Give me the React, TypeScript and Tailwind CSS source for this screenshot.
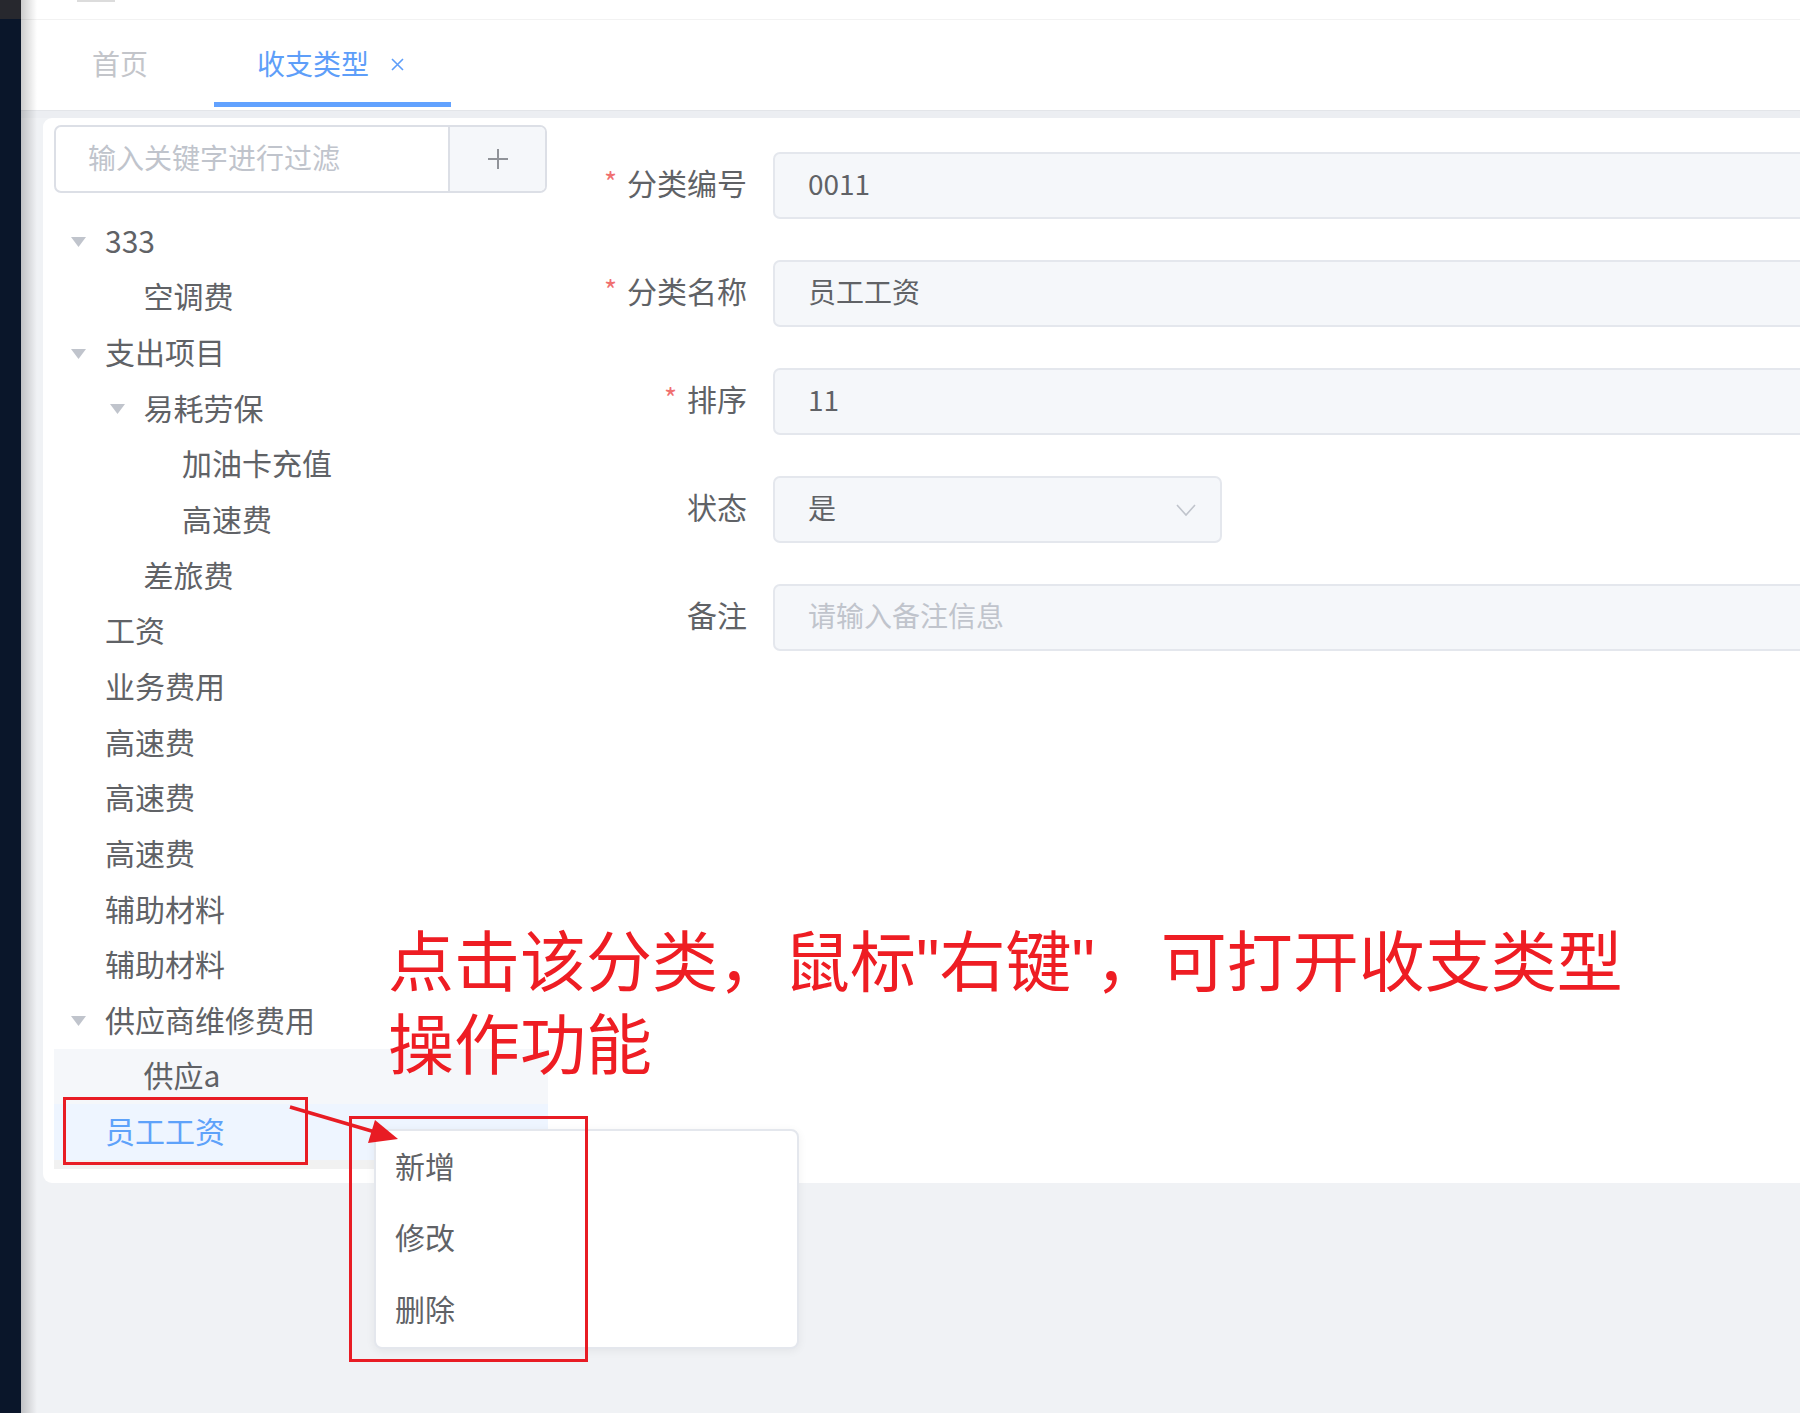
import { clsx } from 'clsx';

type TreeNode = {
  label: string;
  level: 0 | 1 | 2;
  arrow?: boolean;
  hover?: boolean;
  current?: boolean;
};

const nodes: TreeNode[] = [
  { label: '333', level: 0, arrow: true },
  { label: '空调费', level: 1 },
  { label: '支出项目', level: 0, arrow: true },
  { label: '易耗劳保', level: 1, arrow: true },
  { label: '加油卡充值', level: 2 },
  { label: '高速费', level: 2 },
  { label: '差旅费', level: 1 },
  { label: '工资', level: 0 },
  { label: '业务费用', level: 0 },
  { label: '高速费', level: 0 },
  { label: '高速费', level: 0 },
  { label: '高速费', level: 0 },
  { label: '辅助材料', level: 0 },
  { label: '辅助材料', level: 0 },
  { label: '供应商维修费用', level: 0, arrow: true },
  { label: '供应a', level: 1, hover: true },
  { label: '员工工资', level: 0, current: true },
];

const indent = ['pl-0', 'pl-[38.5px]', 'pl-[77px]'];

function Caret() {
  return (
    <svg width="15" height="10" viewBox="0 0 15 10">
      <polygon points="0,0 15,0 7.5,10" fill="#c0c4cc" />
    </svg>
  );
}

function TreeRow({ node }: { node: TreeNode }) {
  return (
    <div
      className={clsx(
        'flex h-[55.65px] items-center pb-[3px]',
        indent[node.level],
        node.hover && 'bg-[#f5f7fa]',
        node.current && 'bg-[#eef5ff]'
      )}
    >
      <span className="flex w-[51px] shrink-0 pl-[17px] pt-[4px]">{node.arrow && <Caret />}</span>
      <span className={clsx('text-[30px]', node.current ? 'text-[#5ea2fa]' : 'text-[#606266]')}>
        {node.label}
      </span>
    </div>
  );
}

function FormRow({ label, required, children }: { label: string; required?: boolean; children: React.ReactNode }) {
  return (
    <div className="flex h-[67px] items-center">
      <div className="flex w-[225px] shrink-0 items-center justify-end pb-[6px] pr-[26px] text-[30px] text-[#606266]">
        {required && <span className="mr-[10px] -mt-[3px] text-[28px] leading-none text-[#f07070]">*</span>}
        {label}
      </div>
      {children}
    </div>
  );
}

function TextBox({ value, placeholder }: { value?: string; placeholder?: string }) {
  return (
    <div className="flex h-[67px] w-[1100px] shrink-0 items-center rounded-[7px] border-2 border-[#e4e7ed] bg-[#f5f7fa] pb-[6px] pl-[33px] text-[28px]">
      {value ? <span className="text-[#606266]">{value}</span> : <span className="text-[#c0c4cc]">{placeholder}</span>}
    </div>
  );
}

export default function App() {
  return (
    <div
      className="relative flex h-[1413px] w-[1800px] overflow-hidden bg-[#f0f2f5]"
      style={{ fontFamily: '"Noto Sans CJK SC", "Noto Sans", sans-serif' }}
    >
      {/* dark side menu edge */}
      <div className="flex w-[21px] shrink-0 flex-col bg-[#0a162a]">
        <div className="h-[19px] bg-[#27282e]" />
      </div>

      <div className="flex min-w-0 flex-1 flex-col">
        <div className="h-[20px] border-b border-[#f2f2f2] bg-white">
          <div className="ml-[56px] h-[2px] w-[38px] bg-[#dcdcdc]" />
        </div>

        {/* tabs */}
        <div className="flex h-[90px] items-stretch bg-white pl-[28px]">
          <div className="flex items-center px-[43px] pb-[5px] text-[28px] text-[#c3c5ca]">首页</div>
          <div className="relative ml-[23px] flex items-center pb-[5px] pl-[43px] pr-[46px] text-[28px] text-[#5e9ef9]">
            收支类型
            <svg className="ml-[21px] mt-[3px]" width="15" height="15" viewBox="0 0 15 15">
              <path d="M2 2 L13 13 M13 2 L2 13" stroke="#5e9ef9" strokeWidth="1.6" />
            </svg>
            <div className="absolute bottom-[3px] left-0 right-0 h-[5px] bg-[#62a2ff]" />
          </div>
        </div>
        <div className="h-[8px] border-t border-[#e3e5e9] bg-[#eceef2]" />

        {/* card */}
        <div className="pl-[22px]">
          <div className="flex h-[1065px] rounded-l-[9px] bg-white">
            <div className="w-[505px] shrink-0 pl-[11px] pt-[7px]">
              <div className="flex h-[68px] w-[493px] overflow-hidden rounded-[7px] border-2 border-[#dcdfe6]">
                <div className="flex flex-1 items-center pb-[5px] pl-[32px] text-[28px] text-[#c0c4cc]">输入关键字进行过滤</div>
                <div className="flex w-[97px] items-center justify-center border-l-2 border-[#dcdfe6] bg-[#f5f7fa]">
                  <svg width="22" height="22" viewBox="0 0 22 22">
                    <path d="M11 1 V21 M1 11 H21" stroke="#909399" strokeWidth="2" />
                  </svg>
                </div>
              </div>
              <div className="mt-[21px]">
                {nodes.map((n, i) => (
                  <TreeRow key={i} node={n} />
                ))}
              </div>
              <div className="h-[9px] bg-[#f1f1f1]" />
            </div>

            <div className="flex min-w-0 flex-1 flex-col gap-[41px] overflow-hidden pt-[34px]">
              <FormRow label="分类编号" required>
                <TextBox value="0011" />
              </FormRow>
              <FormRow label="分类名称" required>
                <TextBox value="员工工资" />
              </FormRow>
              <FormRow label="排序" required>
                <TextBox value="11" />
              </FormRow>
              <FormRow label="状态">
                <div className="flex h-[67px] w-[449px] shrink-0 items-center justify-between rounded-[7px] border-2 border-[#e4e7ed] bg-[#f5f7fa] pl-[33px] pr-[24px] text-[28px] text-[#606266]">
                  <span className="pb-[6px]">是</span>
                  <svg width="20" height="14" viewBox="0 0 20 14">
                    <path d="M1 2 L10 12 L19 2" fill="none" stroke="#c0c4cc" strokeWidth="1.6" />
                  </svg>
                </div>
              </FormRow>
              <FormRow label="备注">
                <TextBox placeholder="请输入备注信息" />
              </FormRow>
            </div>
          </div>
        </div>
      </div>

      {/* shadow cast by the side menu */}
      <div className="pointer-events-none absolute left-[21px] top-0 h-full w-[16px] bg-gradient-to-r from-black/20 to-transparent" />

      {/* context menu */}
      <div className="absolute left-[374px] top-[1129px] flex h-[220px] w-[425px] flex-col rounded-[8px] border-2 border-[#e4e7ed] bg-white pt-[2px] shadow-[0_2px_10px_rgba(0,0,0,0.06)]">
        {['新增', '修改', '删除'].map((t) => (
          <div key={t} className="flex h-[72px] items-center pb-[6px] pl-[19px] text-[30px] text-[#606266]">
            {t}
          </div>
        ))}
      </div>

      {/* annotation */}
      <div className="absolute left-[388px] top-[916px] text-[66px] leading-[83px] text-[#ee1d23]">
        <div>
          点击该分类，鼠标
          <span className="leading-none" style={{ fontFamily: '"Liberation Sans", sans-serif' }}>"</span>
          右键
          <span className="leading-none" style={{ fontFamily: '"Liberation Sans", sans-serif' }}>"</span>
          ，可打开收支类型
        </div>
        <div>操作功能</div>
      </div>
      <div className="absolute left-[63px] top-[1097px] h-[68px] w-[245px] border-[3px] border-[#e81c24]" />
      <div className="absolute left-[349px] top-[1116px] h-[246px] w-[239px] border-[3px] border-[#e81c24]" />
      <svg className="absolute left-0 top-0" width="1800" height="1413" viewBox="0 0 1800 1413">
        <line x1="290" y1="1107" x2="375" y2="1132" stroke="#e81c24" strokeWidth="3.5" />
        <polygon points="398,1139 368,1143 375,1120" fill="#e81c24" />
      </svg>
    </div>
  );
}
